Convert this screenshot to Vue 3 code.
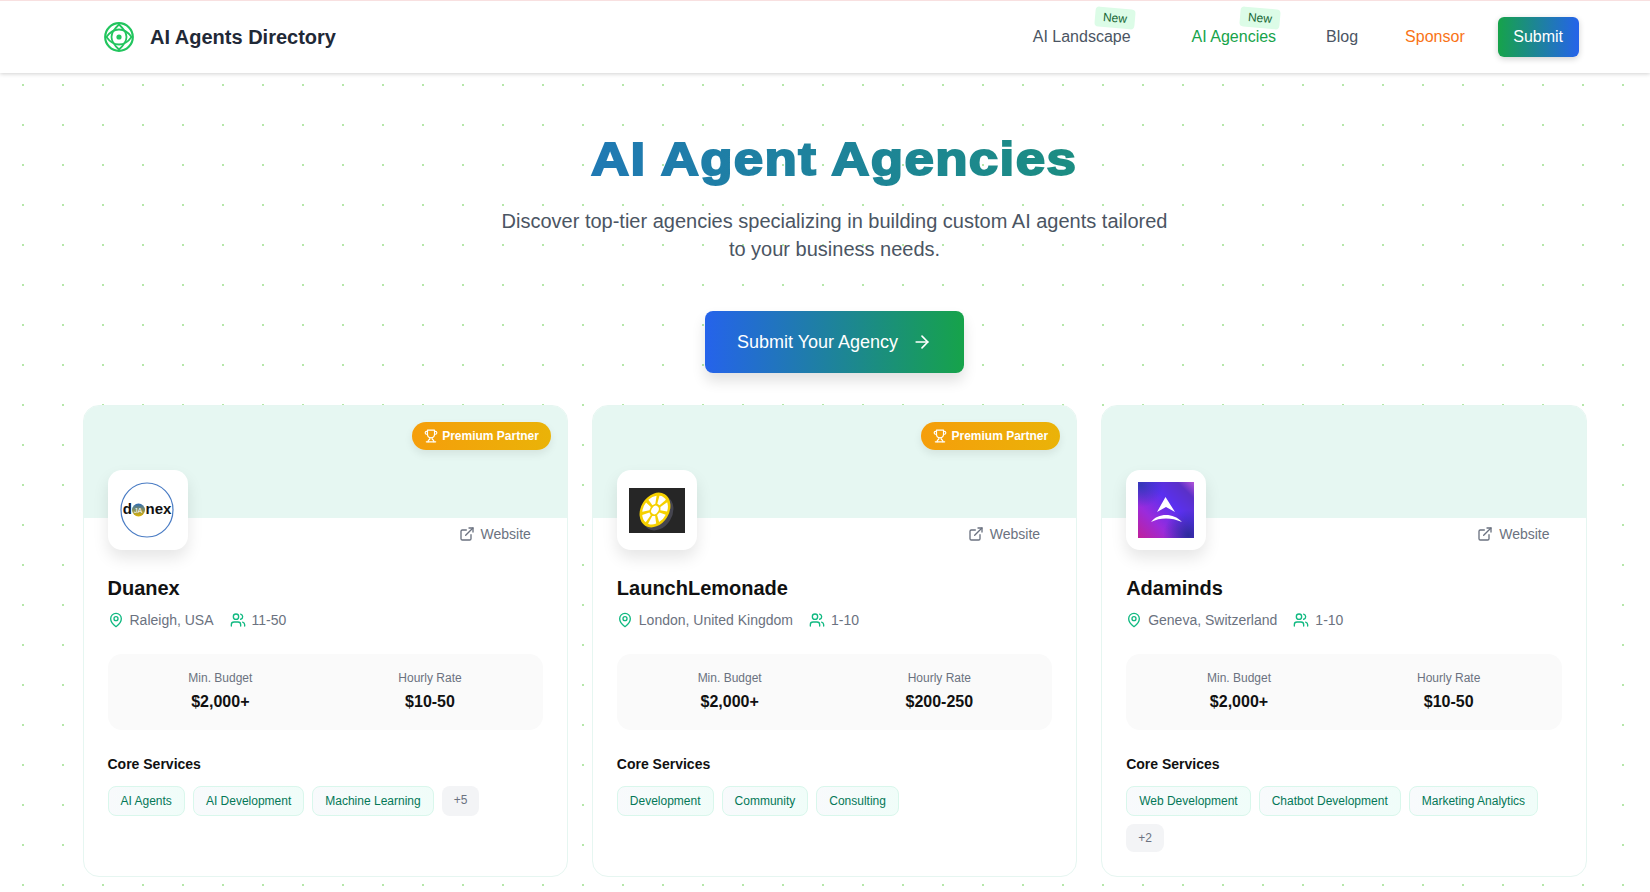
<template>
  <div class="page">
    <header class="topbar">
      <div class="brand">
        <svg class="brand-icon" viewBox="0 0 30 30" fill="none" stroke="#22c55e" stroke-width="1.8">
          <circle cx="15" cy="15" r="13.8" stroke-width="2.2" />
          <path d="M2.5 15C7 8.5 11 7.5 15 7.5s8 1 12.5 7.5C23 21.5 19 22.5 15 22.5S7 21.5 2.5 15Z" />
          <path d="M15 2.5C21 8 22.5 11.5 22.5 15s-1.5 7-7.5 12.5C9 22 7.5 18.5 7.5 15S9 8 15 2.5Z" />
          <circle cx="15" cy="15" r="2.6" fill="#22c55e" stroke="none" />
        </svg>
        <span class="brand-name">AI Agents Directory</span>
      </div>
      <nav class="nav">
        <a class="nav-link nav-landscape">AI Landscape<span class="new-tag">New</span></a>
        <a class="nav-link nav-agencies">AI Agencies<span class="new-tag">New</span></a>
        <a class="nav-link nav-blog">Blog</a>
        <a class="nav-link nav-sponsor">Sponsor</a>
        <a class="nav-submit">Submit</a>
      </nav>
    </header>

    <main class="content">
      <section class="hero">
        <h1><span>AI Agent Agencies</span></h1>
        <p>Discover top-tier agencies specializing in building custom AI agents tailored to your business needs.</p>
        <a class="hero-btn">
          Submit Your Agency
          <svg viewBox="0 0 24 24" width="20" height="20" fill="none" stroke="currentColor" stroke-width="2" stroke-linecap="round" stroke-linejoin="round">
            <path d="M5 12h14" />
            <path d="m12 5 7 7-7 7" />
          </svg>
        </a>
      </section>

      <section class="cards">
        <article v-for="agency in agencies" :key="agency.name" class="card">
          <div class="band">
            <span v-if="agency.premium" class="premium">
              <svg viewBox="0 0 24 24" width="14" height="14" fill="none" stroke="currentColor" stroke-width="2" stroke-linecap="round" stroke-linejoin="round">
                <path d="M6 9H4.5a2.5 2.5 0 0 1 0-5H6" />
                <path d="M18 9h1.5a2.5 2.5 0 0 0 0-5H18" />
                <path d="M4 22h16" />
                <path d="M10 14.66V17c0 .55-.47.98-.97 1.21C7.85 18.75 7 20.24 7 22" />
                <path d="M14 14.66V17c0 .55.47.98.97 1.21C16.15 18.75 17 20.24 17 22" />
                <path d="M18 2H6v7a6 6 0 0 0 12 0V2Z" />
              </svg>
              Premium Partner
            </span>
          </div>
          <div class="body">
            <div class="logo-row">
              <div class="logo">
                <svg v-if="agency.logo === 'duanex'" viewBox="0 0 56 56" width="56" height="56">
                  <defs>
                    <linearGradient id="duaBall" x1="0" y1="0" x2="0" y2="1">
                      <stop offset="0" stop-color="#2b6cb8" />
                      <stop offset="1" stop-color="#e0b400" />
                    </linearGradient>
                  </defs>
                  <ellipse cx="27" cy="28" rx="26" ry="27" fill="#fff" stroke="#4a7cc4" stroke-width="1.2" />
                  <circle cx="18.5" cy="28" r="6.5" fill="url(#duaBall)" />
                  <text x="2.8" y="32.3" class="dua-text">d</text>
                  <text x="14" y="31" class="dua-mid">JA</text>
                  <text x="25.5" y="32.3" class="dua-text">nex</text>
                </svg>
                <svg v-else-if="agency.logo === 'lemon'" viewBox="0 0 56 45" width="56" height="45">
                  <rect width="56" height="45" fill="#262626" />
                  <g transform="translate(29 25) rotate(32) scale(0.76 1)">
                    <circle r="18.5" fill="#45454f" />
                  </g>
                  <g transform="translate(26 22) rotate(32) scale(0.76 1)">
                    <circle r="18.5" fill="#f5d000" />
                    <circle r="4.5" fill="#fff" />
                    <path
                      v-for="a in wedges"
                      :key="a"
                      :transform="`rotate(${a})`"
                      d="M-1.8-6.5 1.8-6.5 5-14.5Q0-16.5-5-14.5Z"
                      fill="#fff"
                    />
                  </g>
                </svg>
                <svg v-else viewBox="0 0 56 56" width="56" height="56">
                  <defs>
                    <linearGradient id="adaBase" x1="0" y1="1" x2="1" y2="0">
                      <stop offset="0" stop-color="#c0209a" />
                      <stop offset="0.3" stop-color="#9a2bdc" />
                      <stop offset="0.6" stop-color="#5a30f0" />
                      <stop offset="0.85" stop-color="#5a30c8" />
                      <stop offset="1" stop-color="#b455d8" />
                    </linearGradient>
                    <radialGradient id="adaDark" cx="0.9" cy="0.95" r="0.45">
                      <stop offset="0" stop-color="#2c2a9c" />
                      <stop offset="1" stop-color="#2c2a9c" stop-opacity="0" />
                    </radialGradient>
                    <radialGradient id="adaDark2" cx="0.05" cy="0.05" r="0.4">
                      <stop offset="0" stop-color="#3438b8" />
                      <stop offset="1" stop-color="#3438b8" stop-opacity="0" />
                    </radialGradient>
                  </defs>
                  <rect width="56" height="56" fill="url(#adaBase)" />
                  <rect width="56" height="56" fill="url(#adaDark)" />
                  <rect width="56" height="56" fill="url(#adaDark2)" />
                  <path d="M27.5 15 37 30 28 25 19 30Z" fill="#fff" />
                  <path d="M13 40C17 35 22 33 28 33s11 2 16 7C38 37.5 33.5 36.5 28 36.5S18 37.5 13 40Z" fill="#fff" />
                </svg>
              </div>
              <a class="website">
                <svg viewBox="0 0 24 24" width="16" height="16" fill="none" stroke="currentColor" stroke-width="2" stroke-linecap="round" stroke-linejoin="round">
                  <path d="M15 3h6v6" />
                  <path d="M10 14 21 3" />
                  <path d="M18 13v6a2 2 0 0 1-2 2H5a2 2 0 0 1-2-2V8a2 2 0 0 1 2-2h6" />
                </svg>
                Website
              </a>
            </div>

            <h2>{{ agency.name }}</h2>
            <div class="meta">
              <span class="meta-item">
                <svg viewBox="0 0 24 24" width="16" height="16" fill="none" stroke="currentColor" stroke-width="2" stroke-linecap="round" stroke-linejoin="round">
                  <path d="M20 10c0 6-8 12-8 12s-8-6-8-12a8 8 0 0 1 16 0Z" />
                  <circle cx="12" cy="10" r="3" />
                </svg>
                <span>{{ agency.location }}</span>
              </span>
              <span class="meta-item">
                <svg viewBox="0 0 24 24" width="16" height="16" fill="none" stroke="currentColor" stroke-width="2" stroke-linecap="round" stroke-linejoin="round">
                  <path d="M16 21v-2a4 4 0 0 0-4-4H6a4 4 0 0 0-4 4v2" />
                  <circle cx="9" cy="7" r="4" />
                  <path d="M22 21v-2a4 4 0 0 0-3-3.87" />
                  <path d="M16 3.13a4 4 0 0 1 0 7.75" />
                </svg>
                <span>{{ agency.size }}</span>
              </span>
            </div>

            <div class="stats">
              <div class="stat">
                <div class="stat-label">Min. Budget</div>
                <div class="stat-value">{{ agency.budget }}</div>
              </div>
              <div class="stat">
                <div class="stat-label">Hourly Rate</div>
                <div class="stat-value">{{ agency.rate }}</div>
              </div>
            </div>

            <h3>Core Services</h3>
            <div class="tags">
              <span v-for="service in agency.services" :key="service" class="tag">{{ service }}</span>
              <span v-if="agency.more" class="tag-more">+{{ agency.more }}</span>
            </div>
          </div>
        </article>
      </section>
    </main>
  </div>
</template>

<script setup>
// seven lemon segments round the hub
const wedges = [0, 51.4, 102.9, 154.3, 205.7, 257.1, 308.6]

const agencies = [
  {
    name: 'Duanex',
    logo: 'duanex',
    premium: true,
    location: 'Raleigh, USA',
    size: '11-50',
    budget: '$2,000+',
    rate: '$10-50',
    services: ['AI Agents', 'AI Development', 'Machine Learning'],
    more: 5,
  },
  {
    name: 'LaunchLemonade',
    logo: 'lemon',
    premium: true,
    location: 'London, United Kingdom',
    size: '1-10',
    budget: '$2,000+',
    rate: '$200-250',
    services: ['Development', 'Community', 'Consulting'],
    more: 0,
  },
  {
    name: 'Adaminds',
    logo: 'adaminds',
    premium: false,
    location: 'Geneva, Switzerland',
    size: '1-10',
    budget: '$2,000+',
    rate: '$10-50',
    services: ['Web Development', 'Chatbot Development', 'Marketing Analytics'],
    more: 2,
  },
]
</script>

<style>
html,
body {
  margin: 0;
  overflow: hidden;
}
</style>

<style scoped>
.page {
  height: 892px;
  overflow: hidden;
  background-color: #fff;
  background-image: radial-gradient(circle, #b5e7a9 1px, transparent 1px);
  background-size: 40px 40px;
  background-position: 3px 25px;
  font-family: 'Liberation Sans', Arial, sans-serif;
  color: #111;
}
a {
  text-decoration: none;
}

.topbar {
  height: 72px;
  box-sizing: content-box;
  border-top: 1px solid #f8e0e0;
  padding: 0 71.5px 0 104px;
  display: flex;
  align-items: center;
  justify-content: space-between;
  background: #fff;
  box-shadow: 0 1px 4px rgba(0, 0, 0, 0.18);
}
.brand {
  display: flex;
  align-items: center;
  gap: 16px;
}
.brand-icon {
  width: 30px;
  height: 30px;
}
.brand-name {
  font-size: 20px;
  font-weight: 700;
  color: #1f2937;
}
.nav {
  display: flex;
  align-items: center;
}
.nav-link {
  position: relative;
  font-size: 16px;
  line-height: 24px;
  color: #4b5563;
}
.nav-landscape {
  margin-right: 61px;
}
.nav-agencies {
  margin-right: 50px;
  color: #16a34a;
}
.nav-blog {
  margin-right: 47px;
}
.nav-sponsor {
  margin-right: 33px;
  color: #f97316;
}
.new-tag {
  position: absolute;
  top: -17px;
  right: -4px;
  padding: 2px 8px;
  font-size: 12px;
  line-height: 16px;
  color: #166534;
  background: #dcfce7;
  border-radius: 4px;
  transform: rotate(5deg);
}
.nav-submit {
  height: 40px;
  padding: 0 15.5px;
  display: flex;
  align-items: center;
  font-size: 16px;
  color: #fff;
  background: linear-gradient(90deg, #16a34a, #2563eb);
  border-radius: 6px;
  box-shadow: 0 2px 6px rgba(0, 0, 0, 0.18);
}

.content {
  width: 1504px;
  margin-left: 82.5px;
}
.hero {
  padding-top: 62px;
  display: flex;
  flex-direction: column;
  align-items: center;
}
h1 {
  align-self: stretch;
  margin: 0;
  font-size: 47px;
  line-height: 48px;
  font-weight: 700;
  text-align: center;
}
/* the heading is wider and heavier than the bold face: stroke widens the clip, scale widens the letters */
h1 span {
  display: inline-block;
  padding: 2px 4px 8px;
  margin: -2px 0 -8px;
  letter-spacing: 1.2px;
  background: linear-gradient(90deg, #2079b4, #1b8d81);
  -webkit-background-clip: text;
  background-clip: text;
  color: transparent;
  -webkit-text-stroke: 2px transparent;
  transform: scaleX(1.125);
}
.hero p {
  width: 672px;
  margin: 24px 0 0;
  font-size: 20px;
  line-height: 28px;
  text-align: center;
  color: #4b5563;
}
.hero-btn {
  margin-top: 48px;
  height: 62px;
  padding: 0 32px;
  box-sizing: border-box;
  display: flex;
  align-items: center;
  gap: 14px;
  font-size: 18px;
  color: #fff;
  background: linear-gradient(90deg, #2563eb, #16a34a);
  border-radius: 8px;
  box-shadow: 0 8px 14px rgba(0, 0, 0, 0.12);
}

.cards {
  margin-top: 32px;
  display: grid;
  grid-template-columns: repeat(3, 1fr);
  gap: 24px;
}
.card {
  border: 1px solid #e6f6f1;
  border-radius: 16px;
  background: #fff;
  overflow: hidden;
}
.band {
  position: relative;
  height: 112px;
  background: #e6f7f2;
}
.premium {
  position: absolute;
  top: 16px;
  right: 16px;
  height: 28px;
  box-sizing: border-box;
  padding: 0 12px;
  display: flex;
  align-items: center;
  gap: 4.5px;
  font-size: 12px;
  font-weight: 700;
  color: #fff;
  background: linear-gradient(90deg, #f59e0b, #eab308);
  border-radius: 14px;
  box-shadow: 0 4px 8px rgba(0, 0, 0, 0.08);
}
.body {
  padding: 0 24px 24px;
}
.logo-row {
  display: flex;
  justify-content: space-between;
  margin-top: -48px;
}
.logo {
  position: relative;
  width: 80px;
  height: 80px;
  display: flex;
  align-items: center;
  justify-content: center;
  background: #fff;
  border-radius: 14px;
  box-shadow: 0 8px 16px rgba(0, 0, 0, 0.1);
}
.dua-text {
  font-size: 15px;
  font-weight: 700;
  font-family: 'Liberation Sans', Arial, sans-serif;
  fill: #111;
}
.dua-mid {
  font-size: 7px;
  font-family: 'Liberation Sans', Arial, sans-serif;
  fill: #fff;
}
.website {
  margin-top: 56px;
  margin-right: 12px;
  height: 16px;
  display: flex;
  align-items: center;
  gap: 6px;
  font-size: 14px;
  color: #6b7280;
}
h2 {
  margin: 24px 0 0;
  font-size: 20px;
  line-height: 28px;
  font-weight: 700;
  color: #111;
}
.meta {
  margin-top: 8px;
  display: flex;
  gap: 16px;
  font-size: 14px;
  line-height: 20px;
  color: #6b7280;
}
.meta-item {
  display: flex;
  align-items: center;
  gap: 6px;
}
.meta-item svg {
  color: #10b981;
}
.stats {
  margin-top: 24px;
  padding: 16px;
  display: grid;
  grid-template-columns: 1fr 1fr;
  gap: 16px;
  background: #fafafa;
  border-radius: 14px;
  text-align: center;
}
.stat-label {
  font-size: 12px;
  line-height: 16px;
  color: #6b7280;
}
.stat-value {
  margin-top: 4px;
  font-size: 16px;
  line-height: 24px;
  font-weight: 700;
  color: #111;
}
h3 {
  margin: 24px 0 0;
  font-size: 14px;
  line-height: 20px;
  font-weight: 700;
  color: #111;
}
.tags {
  margin-top: 12px;
  display: flex;
  flex-wrap: wrap;
  gap: 8px;
}
.tag {
  padding: 6px 12px;
  font-size: 12px;
  line-height: 16px;
  color: #047857;
  background: linear-gradient(90deg, #f8fafc, #f0fdf9);
  border: 1px solid #d9f7ec;
  border-radius: 8px;
}
.tag-more {
  padding: 6px 12px;
  font-size: 12px;
  line-height: 16px;
  color: #6b7280;
  background: #f3f4f6;
  border-radius: 8px;
}
</style>
